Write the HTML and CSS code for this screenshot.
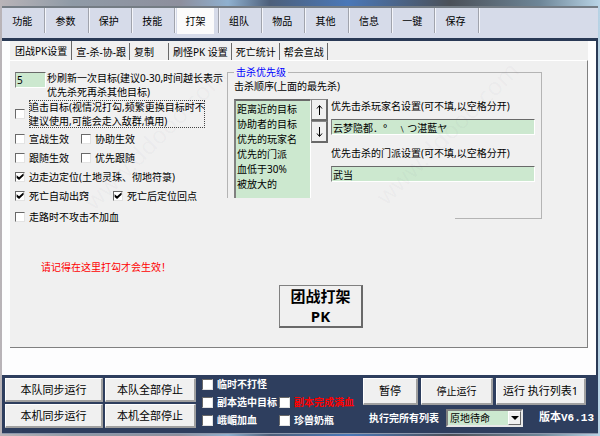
FILE: index.html
```
<!DOCTYPE html>
<html lang="zh-CN">
<head>
    <meta charset="UTF-8">
    <title>打架</title>
    <link rel="stylesheet" href="styles.css">
</head>
<body>
<div class="window">
    <nav class="toolbar">
        <ul class="menu">
            <li><a href="#">功能</a></li>
            <li><a href="#">参数</a></li>
            <li><a href="#">保护</a></li>
            <li><a href="#">技能</a></li>
            <li><a href="#" class="current">打架</a></li>
            <li><a href="#">组队</a></li>
            <li><a href="#">物品</a></li>
            <li><a href="#">其他</a></li>
            <li><a href="#">信息</a></li>
            <li><a href="#">一键</a></li>
            <li><a href="#">保存</a></li>
        </ul>
    </nav>

    <main class="main">
        <div class="tabs">
            <button type="button" class="tab active">团战PK设置</button>
            <button type="button" class="tab">宣-杀-协-跟</button>
            <button type="button" class="tab wide">复制</button>
            <button type="button" class="tab">刷怪PK 设置</button>
            <button type="button" class="tab">死亡统计</button>
            <button type="button" class="tab">帮会宣战</button>
        </div>
        <div class="page">
            <div class="columns">
                <div class="options">
                    <div class="refresh">
                        <input type="text" class="field" id="sec" value="5">
                        <label for="sec">秒刷新一次目标(建议0-30,时间越长表示<br>优先杀死再杀其他目标)</label>
                    </div>
                    <label class="check chase"><input type="checkbox"><span class="focus">追击目标(视情况打勾,频繁更换目标时不<br>建议使用,可能会走入敌群,慎用)</span></label>
                    <div class="row">
                        <label class="check"><input type="checkbox">宣战生效</label>
                        <label class="check"><input type="checkbox">协助生效</label>
                    </div>
                    <div class="row">
                        <label class="check"><input type="checkbox">跟随生效</label>
                        <label class="check"><input type="checkbox">优先跟随</label>
                    </div>
                    <div class="row">
                        <label class="check"><input type="checkbox" checked>边走边定位(土地灵珠、彻地符箓)</label>
                    </div>
                    <div class="row far">
                        <label class="check"><input type="checkbox" checked>死亡自动出窍</label>
                        <label class="check"><input type="checkbox" checked>死亡后定位回点</label>
                    </div>
                    <div class="row">
                        <label class="check"><input type="checkbox">走路时不攻击不加血</label>
                    </div>
                    <p class="note">请记得在这里打勾才会生效！</p>
                </div>

                <fieldset class="group">
                    <legend>击杀优先级</legend>
                    <label class="caption" for="order">击杀顺序(上面的最先杀)</label>
                    <div class="group-body">
                        <select class="list" id="order" size="6">
                            <option>距离近的目标</option>
                            <option>协助者的目标</option>
                            <option>优先的玩家名</option>
                            <option>优先的门派</option>
                            <option>血低于30%</option>
                            <option>被放大的</option>
                        </select>
                        <div class="arrows">
                            <button type="button" class="btn arrow" aria-label="上移"><svg viewBox="0 0 7 12"><path d="M3.5 11V2M1 4.5L3.5 1.5L6 4.5"/></svg></button>
                            <button type="button" class="btn arrow" aria-label="下移"><svg viewBox="0 0 7 12"><path d="M3.5 1V10M1 7.5L3.5 10.5L6 7.5"/></svg></button>
                        </div>
                        <div class="names">
                            <label for="player">优先击杀玩家名设置(可不填,以空格分开)</label>
                            <input type="text" class="field" id="player" value="云梦隐都．°　﹨つ湛藍ヤ">
                            <label for="school">优先击杀的门派设置(可不填,以空格分开)</label>
                            <input type="text" class="field" id="school" value="武当">
                        </div>
                    </div>
                </fieldset>
            </div>
            <button type="button" class="btn start">团战打架<br>PK</button>
            <div class="watermark left" aria-hidden="true">www.ddooo.com</div>
            <div class="watermark right" aria-hidden="true">www.ddooo.com</div>
        </div>
    </main>

    <footer class="bottom">
        <div class="sync">
            <button type="button" class="btn">本队同步运行</button>
            <button type="button" class="btn">本队全部停止</button>
            <button type="button" class="btn">本机同步运行</button>
            <button type="button" class="btn">本机全部停止</button>
        </div>
        <div class="flags">
            <label class="check full"><input type="checkbox">临时不打怪</label>
            <label class="check"><input type="checkbox">副本选中目标</label>
            <label class="check red"><input type="checkbox">副本完成满血</label>
            <label class="check"><input type="checkbox">峨嵋加血</label>
            <label class="check"><input type="checkbox">珍兽奶瓶</label>
        </div>
        <div class="run">
            <div class="run-buttons">
                <button type="button" class="btn">暂停</button>
                <button type="button" class="btn small">停止运行</button>
                <button type="button" class="btn">运行 执行列表1</button>
            </div>
            <div class="status">
                <label for="after">执行完所有列表</label>
                <div class="combo">
                    <select id="after">
                        <option>原地待命</option>
                    </select>
                    <span class="drop"></span>
                </div>
                <span class="version">版本V6.13</span>
            </div>
        </div>
    </footer>
</div>
</body>
</html>
```
FILE: styles.css
```
* {
    margin: 0;
    padding: 0;
    box-sizing: border-box;
}

body {
    min-height: 100vh;
    padding: 6px 2px 2px;
    background: linear-gradient(90deg, #b9b4b8, #8f9aa6 12%, #8d8f9d 30%, #8fb0cf 38%, #4d5f7a 45%, #4a78b8 58%, #4b5058 75%, #6e8698 90%, #b9d4e6);
    font: 10px/14px "Noto Sans", "Noto Sans CJK SC", sans-serif;
    color: #000;
}

button, input, select {
    font: inherit;
    color: inherit;
    border-radius: 0;
    outline: none;
}

ul {
    list-style: none;
}

.window {
    border-top: 2px solid #747c84;
    background: #fdfdfe;
}

/* 顶部菜单 */
.toolbar {
    height: 33px;
    background: #d6dbe9;
    border-bottom: 3px solid #293955;
}

.menu {
    display: flex;
    width: 80%;
}

.menu li {
    flex: 1;
    height: 25px;
    border-right: 1px solid #a0a3ac;
    box-shadow: 1px 0 #f4f5fa;
}

.menu a {
    display: block;
    height: 26px;
    margin: 0 4px 0 2px;
    line-height: 26px;
    text-align: center;
    color: #000;
    text-decoration: none;
}

.menu .current {
    background: #fbfbfb;
}

/* 选项卡 */
.main {
    padding: 0 8px 27px;
    border-right: 2px solid #293955;
}

.tabs {
    display: flex;
    height: 19px;
    background: #f0f0f0;
}

.tab {
    height: 17px;
    margin-top: 2px;
    padding: 0 3px 0 4px;
    border: 0;
    border-right: 1px solid #696969;
    background: #f0f0f0;
    white-space: nowrap;
}

.tab.active {
    height: 19px;
    margin-top: 0;
    padding: 0 4px 0 5px;
}

.tab.wide {
    padding-right: 14px;
}

.page {
    position: relative;
    padding: 10px 45px 19px 5px;
    background: #f0f0f0;
    border-top: 1px solid #fff;
    border-right: 1px solid #808080;
    border-bottom: 1px solid #808080;
    white-space: nowrap;
}

.columns {
    display: flex;
}

.options {
    flex: 0 0 212px;
}

.field {
    height: 16px;
    padding: 0 1px;
    background: #cce8cf;
    border: 1px solid #fff;
    border-top-color: #696969;
    border-left-color: #808080;
}

.refresh {
    display: flex;
    gap: 1px;
}

.refresh .field {
    width: 31px;
    margin-top: 1px;
}

.check {
    display: flex;
    align-items: center;
    gap: 4px;
}

.check input {
    appearance: none;
    flex: none;
    width: 10px;
    height: 10px;
    background: #fff;
    border: 1px solid #e3e3e3;
    border-top-color: #696969;
    border-left-color: #696969;
}

.check input:checked::before {
    content: "";
    display: block;
    width: 8px;
    height: 8px;
    background: #000;
    clip-path: polygon(8% 35%, 38% 60%, 95% 8%, 95% 40%, 38% 95%, 8% 68%);
}

.chase {
    margin: 1px 0;
}

.focus {
    outline: 1px dotted #444;
    outline-offset: -1px;
}

.row {
    display: flex;
    gap: 12px;
    height: 19px;
}

.far {
    gap: 24px;
    margin-bottom: 2px;
}

.note {
    padding: 34px 0 11px 26px;
    color: #f00;
}

.group {
    position: relative;
    flex: 1;
    min-width: 0;
    align-self: flex-start;
    height: 154px;
    margin-top: -6px;
    padding: 0 6px;
    border: 1px solid #b4b4b4;
}

/* 左下角不画边框 */
.group::after {
    content: "";
    position: absolute;
    left: -1px;
    right: 86px;
    bottom: -1px;
    height: 21px;
    background: #f0f0f0;
}

.group legend {
    padding: 0 2px;
    color: #00f;
}

.caption {
    display: block;
    height: 20px;
}

.group-body {
    display: flex;
}

.list {
    width: 77px;
    height: 112px;
    overflow: hidden;
    background: #cce8cf;
    border: 1px solid #fff;
    border-top: 2px solid #696969;
    border-left: 2px solid #808080;
}

.list option {
    min-height: 0;
    padding: 0 1px;
    line-height: 15px;
}

.btn {
    background: #f0f0f0;
    border: 1px solid #fff;
    border-right: 2px solid #696969;
    border-bottom: 2px solid #696969;
    white-space: nowrap;
}

.arrows {
    width: 17px;
}

.arrow {
    display: flex;
    align-items: center;
    justify-content: center;
    width: 100%;
    height: 22px;
    border-color: #888 #696969 #696969 #888;
}

.arrow svg {
    width: 7px;
    height: 12px;
    fill: none;
    stroke: #000;
}

.names {
    display: flex;
    flex: 1;
    flex-direction: column;
    min-width: 0;
    padding-left: 3px;
}

.names .field {
    width: 100%;
    margin: 6px 0 11px;
}

.start {
    display: block;
    width: 84px;
    margin-left: 264px;
    border-color: #808080 #696969 #696969 #808080;
    font-size: 15px;
    font-weight: bold;
    line-height: 20px;
}

.watermark {
    position: absolute;
    font-size: 24px;
    color: rgba(90, 90, 140, .04);
    transform: rotate(-45deg);
    pointer-events: none;
}

.watermark.left {
    left: 50px;
    top: 70px;
}

.watermark.right {
    right: 45px;
    top: 65px;
}

/* 底部 */
.bottom {
    display: flex;
    padding: 3px 3px 4px;
    background: #2e3e5e;
    border-bottom: 1px solid #8c98ac;
    color: #fff;
    white-space: nowrap;
}

.bottom .btn {
    color: #000;
    font-size: 11px;
    border-color: #fff #a0a0a0 #a0a0a0 #fff;
}

.sync {
    display: grid;
    grid-template-columns: 98px 91px;
    grid-auto-rows: 24px;
    gap: 2px;
}

.flags {
    display: grid;
    grid-template-columns: 77px 84px;
    grid-auto-rows: 18px;
    margin-left: 6px;
    margin-top: -3px;
    font-weight: bold;
}

.flags .full {
    grid-column: 1 / 3;
}

.flags input {
    width: 11px;
    height: 11px;
}

.flags .red {
    color: #f00;
}

.run {
    flex: 1;
    min-width: 0;
}

.run-buttons {
    display: flex;
    gap: 3px;
}

.run-buttons .btn {
    width: 55px;
    height: 27px;
}

.run-buttons .btn.small {
    width: 72px;
    font-size: 10px;
}

.run-buttons .btn:last-child {
    width: 90px;
}

.status {
    display: flex;
    align-items: center;
    margin-top: 4px;
    padding-left: 6px;
    font-weight: bold;
}

.combo {
    position: relative;
    width: 77px;
    margin: 0 16px 0 7px;
}

.combo select {
    display: block;
    appearance: none;
    width: 100%;
    height: 18px;
    padding: 0 2px;
    background: #cce8cf;
    border: 2px solid #e8e8e8;
    border-top-color: #808080;
    border-left-color: #808080;
    color: #000;
    font-weight: normal;
}

.drop {
    position: absolute;
    top: 2px;
    right: 2px;
    width: 13px;
    height: 14px;
    background: #f0f0f0;
    border: 1px solid #fff;
    border-right-color: #696969;
    border-bottom-color: #696969;
    pointer-events: none;
}

.drop::before {
    content: "";
    position: absolute;
    left: 2px;
    top: 4px;
    border: 4px solid transparent;
    border-top-color: #000;
    border-bottom: 0;
}

.version {
    font: bold 11px/14px "Liberation Mono", "Noto Sans CJK SC", monospace;
}
```
